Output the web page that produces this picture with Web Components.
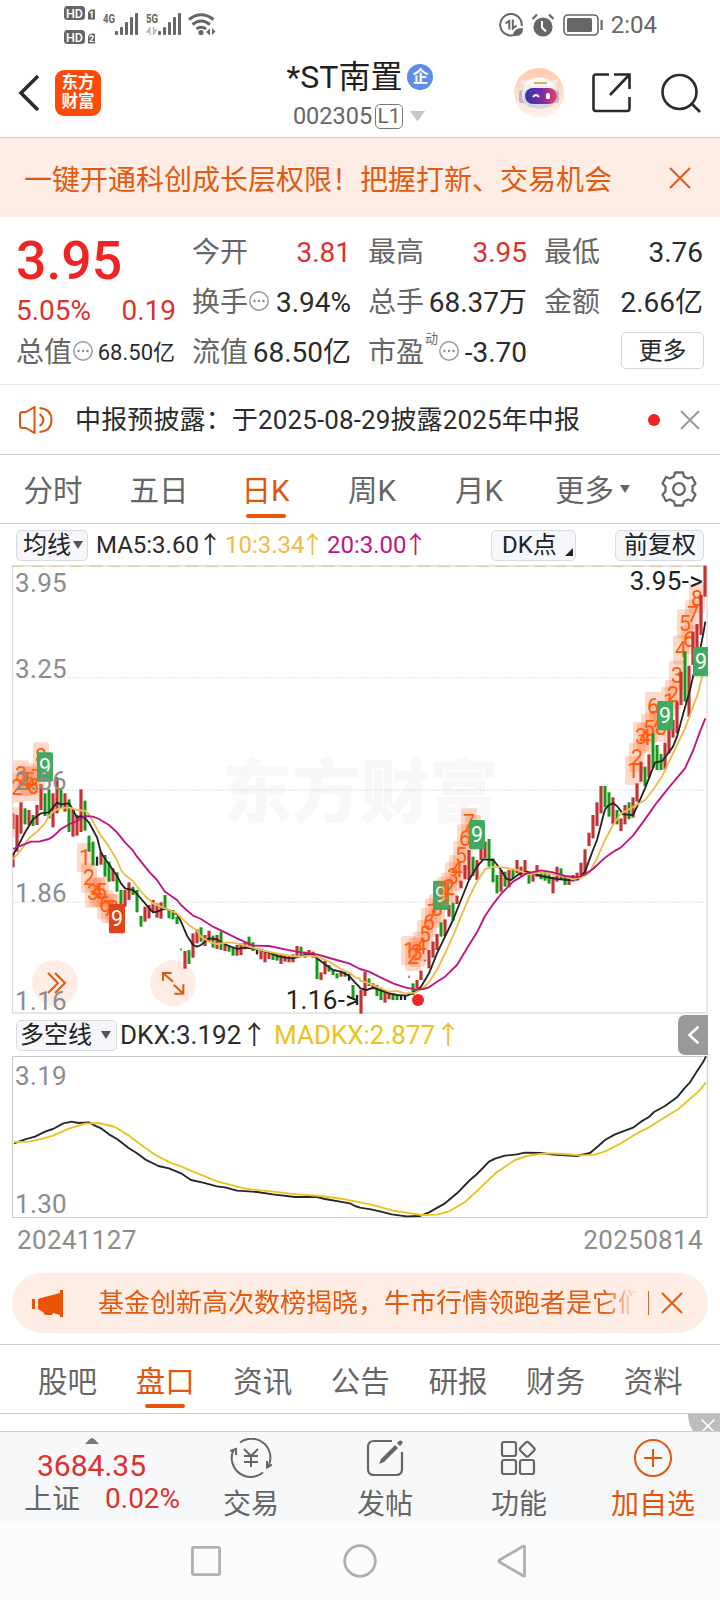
<!DOCTYPE html>
<html lang="zh-CN">
<head>
<meta charset="utf-8">
<title>*ST南置 002305</title>
<style>
html,body{margin:0;padding:0;background:#fff}
body{width:720px;height:1600px;overflow:hidden;font-family:Roboto,"Noto Sans CJK SC",sans-serif;color:#2b2b2b}
</style>
</head>
<body>
<stock-app></stock-app>
<script>
const define = (name, css, html, setup) => {
  const tpl = document.createElement('template');
  tpl.innerHTML = `<style>:host{display:block;box-sizing:border-box}*{box-sizing:border-box}svg{display:block;flex:none}${css}</style>${html}`;
  customElements.define(name, class extends HTMLElement {
    constructor() {
      super();
      this.attachShadow({mode: 'open'}).appendChild(tpl.content.cloneNode(true));
    }
    connectedCallback() { if (setup) setup(this.shadowRoot, this); }
  });
};

define('status-bar', `
:host{height:48px;display:flex;justify-content:space-between;padding:0 64px 0 64px}
.r{display:flex;align-items:center;padding-top:1px;font-size:24px;line-height:30px;color:#666}
`, `
<svg width="154" height="48" viewBox="64 0 154 48" fill="#666" font-family="Roboto,sans-serif">
 <rect x="64" y="6" width="21" height="14" rx="3.5"/><rect x="64" y="30" width="21" height="14" rx="3.5"/>
 <g fill="#fff" font-size="13.5" font-weight="500"><text x="66" y="17.800" textLength="17" lengthAdjust="spacingAndGlyphs">HD</text><text x="66" y="41.800" textLength="17" lengthAdjust="spacingAndGlyphs">HD</text></g>
 <path d="M88 12l3-2.500h4v10h-7zM88 36l3-2.500h4v10h-7z"/>
 <g fill="#fff" font-size="9" font-weight="700"><text x="89" y="18.300">1</text><text x="89" y="42.300">2</text></g>
 <g font-size="12.500" font-weight="700"><text x="103" y="23" textLength="12" lengthAdjust="spacingAndGlyphs">4G</text><text x="146" y="23" textLength="12" lengthAdjust="spacingAndGlyphs">5G</text></g>
 <g><rect x="115" y="31" width="3" height="4" rx="1"/><rect x="120" y="27" width="3" height="8" rx="1"/><rect x="125" y="22" width="3" height="13" rx="1"/><rect x="130" y="17" width="3" height="18" rx="1"/><rect x="135" y="13" width="3" height="22" rx="1"/></g>
 <g transform="translate(43 0)"><rect x="115" y="31" width="3" height="4" rx="1"/><rect x="120" y="27" width="3" height="8" rx="1"/><rect x="125" y="22" width="3" height="13" rx="1"/><rect x="130" y="17" width="3" height="18" rx="1"/><rect x="135" y="13" width="3" height="22" rx="1"/></g>
 <path d="M150 27v8M153.500 27v8M150 28l-3 4h3M153.500 34l3-4h-3" fill="none" stroke="#bbb" stroke-width="1.400"/>
 <g fill="none" stroke="#666" stroke-width="3"><path d="M189 19.500q12-9.500 24.500 0M192.500 24.500q8.500-7 17.500 0M196.500 29q4.500-3.500 9.500 0"/></g>
 <circle cx="201" cy="32.500" r="2.600"/><path d="M210 28.500v7l-4-3.500zM212 28v7l3.500-3.500z"/>
</svg>
<div class="r">
<svg width="24" height="24" viewBox="0 0 24 24" fill="none" stroke="#666" stroke-width="2"><path d="M14 22.300A10.800 10.800 0 1 1 22.700 13"/><path d="M10.300 16.500V8L6.500 10.500M13.800 6.500V15.500L17.500 12.500"/><path d="M14 23q0-8 10-8 0 8-7 8z" fill="#666" stroke="none"/></svg>
<svg style="margin-left:8px" width="24" height="24" viewBox="0 0 24 24"><circle cx="12" cy="14" r="9.600" fill="#666"/><path d="M1.500 6l4.500-4.500M22.500 6L18 1.500" stroke="#666" stroke-width="2.200"/><path d="M11 8v6.500l4 4" stroke="#fff" stroke-width="2" fill="none"/></svg>
<svg style="margin:0 8px 0 8px" width="40" height="22" viewBox="0 0 40 22"><rect x="1" y="1" width="34" height="20" rx="4" fill="none" stroke="#666" stroke-width="1.600"/><rect x="4" y="4" width="25" height="14" rx="1.500" fill="#666"/><rect x="37.500" y="6" width="2.200" height="10" fill="#666"/></svg>
<span style="margin-right:-1px">2:04</span></div>`);

define('stock-header', `
:host{height:90px;display:grid;grid-template-columns:1fr 146px 1fr;border-bottom:1px solid #ccc;padding:0 38px 0 18px}
.l{display:flex;gap:16px;align-items:center}
.logo{width:46px;height:46px;border-radius:9px;background:#ff4a08;color:#fff;font-weight:700;font-size:16.500px;line-height:19px;display:grid;place-content:center;text-align:center;padding-bottom:1px}
.t{display:flex;flex-direction:column;align-items:center;margin-left:15px;margin-right:-5px;padding-top:11px}
.n{display:flex;align-items:center;font-size:32px;line-height:36px;color:#1f1f1f;white-space:nowrap}
.q{width:26px;height:26px;border-radius:50%;background:#5d8de6;color:#fff;font-size:16px;font-weight:700;line-height:25px;text-align:center;margin-left:5px}
.c{display:flex;align-items:center;font-size:23.500px;line-height:30px;color:#666;margin-top:6px;margin-left:-2px}
.lv{border:1.500px solid #777;border-radius:5px;width:28px;height:25px;line-height:22px;font-size:21px;text-align:center;margin:0 7px 0 3px}
.r{display:flex;align-items:center;justify-content:flex-end;margin-right:-19px}
`, `
<div class="l"><svg width="21" height="38" viewBox="0 0 21 38"><path d="M20 2L3 19l17 17" fill="none" stroke="#2b2b2b" stroke-width="3.600"/></svg><div class="logo">东方<br>财富</div></div>
<div class="t"><div class="n">*ST南置<span class="q">企</span></div>
<div class="c">002305<span class="lv">L1</span><svg width="15" height="11" viewBox="0 0 15 11"><path d="M0 0h15L7.500 10.500z" fill="#c6c6c6"/></svg></div></div>
<div class="r">
<svg width="50" height="50" viewBox="0 0 50 50"><defs><linearGradient id="h" x2="0" y2="1"><stop stop-color="#ffc9ad"/><stop offset="1" stop-color="#fff3ee"/></linearGradient><linearGradient id="v"><stop stop-color="#3433a8"/><stop offset=".55" stop-color="#7a2da8"/><stop offset="1" stop-color="#ef4260"/></linearGradient><linearGradient id="w" x2="0" y2="1"><stop stop-color="#fff"/><stop offset="1" stop-color="#cfd0da"/></linearGradient></defs><circle cx="25" cy="25" r="25" fill="url(#h)"/><path d="M6 11q1 6 5 7L17 12q-8 2-11-1zM44 10q0 6-4 8l-6-5q7 1 10-3z" fill="#eeeaf0"/><rect x="5" y="22" width="7" height="13" rx="3" fill="#b9b8c4"/><rect x="38" y="22" width="7" height="13" rx="3" fill="#b9b8c4"/><path d="M8 29Q7 10 25 9.500 43 10 43 29q-1 11-18 11.500Q9 40 8 29z" fill="url(#w)"/><rect x="11" y="20" width="32" height="16" rx="8" fill="url(#v)"/><path d="M19 29q3-4 6 0" fill="none" stroke="#fff" stroke-width="2"/><rect x="32" y="25" width="4" height="6" rx="1.500" fill="#fff"/><path d="M20 15h13" stroke="#e8a66c" stroke-width="2"/></svg>
<svg style="margin-left:28px" width="39" height="40" viewBox="0 0 39 40" fill="none" stroke="#2b2b2b" stroke-width="2.600"><path d="M17 1.500H4Q1.500 1.500 1.500 4v31.500Q1.500 38 4 38h31Q37.500 38 37.500 35.500V24M22 1.500h15.500V16M37 2L18 22"/></svg>
<svg style="margin-left:30px" width="40" height="40" viewBox="0 0 40 40" fill="none" stroke="#2b2b2b" stroke-width="2.600"><circle cx="18.500" cy="19" r="17"/><path d="M30 30l9 9"/></svg>
</div>`);

define('promo-banner', `
:host{height:79px;background:#fdede4;color:#e25a10;font-size:28px;line-height:79px;display:flex;align-items:center;justify-content:space-between;padding:0 29px 0 24px;white-space:nowrap}
span{padding-top:5px}
`, `<span><slot></slot></span><svg width="22" height="22" viewBox="0 0 22 22"><path d="M1 1l20 20M21 1L1 21" stroke="#e25a10" stroke-width="2"/></svg>`);

define('stat-item', `
:host{display:flex;align-items:center;justify-content:space-between;height:50px;font-size:28px;line-height:50px;white-space:nowrap}
.k{color:#666;display:flex;align-items:center;margin-left:-1px}.k svg{display:none;margin:-5px 0 0 1px}
sup{font-size:13px;line-height:14px;align-self:flex-start;margin:4px 0 0 1px}
sup:empty{display:none}
:host([info]) .k svg{display:block}
:host([up]) .v{color:#e0302c}:host([small]) .v{font-size:22px}
.v{margin-right:1px}
`, `<span class="k"><slot name="k"></slot><sup></sup><svg width="20" height="20" viewBox="0 0 20 20"><circle cx="10" cy="10" r="9.200" fill="none" stroke="#999" stroke-width="1.500"/><g fill="#888"><circle cx="5.500" cy="10" r="1.200"/><circle cx="10" cy="10" r="1.200"/><circle cx="14.500" cy="10" r="1.200"/></g></svg></span><span class="v"><slot></slot></span>`,
(r, el) => r.querySelector('sup').textContent = el.getAttribute('tag') || '');

define('quote-panel', `
:host{height:168px;display:grid;grid-template-columns:repeat(4,159px);column-gap:17px;padding:11px 16px 0 17px;border-bottom:1px solid #e8e8e8}
.p{font-size:53.500px;line-height:65px;height:66px;font-weight:500;color:#f02424;margin-left:-1px}
.d{display:flex;justify-content:space-between;font-size:28px;line-height:34px;height:34px;color:#e0302c;margin-left:-1px}
.more{width:83px;height:37px;border:1px solid #d5d5d5;border-radius:5px;font-size:24px;line-height:36px;text-align:center;margin:4px 0 0 auto}
`, `
<div><div class="p">3.95</div><div class="d"><span>5.05%</span><span>0.19</span></div><stat-item info small><span slot="k">总值</span>68.50亿</stat-item></div>
<div><stat-item up><span slot="k">今开</span>3.81</stat-item><stat-item info><span slot="k">换手</span>3.94%</stat-item><stat-item><span slot="k">流值</span>68.50亿</stat-item></div>
<div><stat-item up><span slot="k">最高</span>3.95</stat-item><stat-item><span slot="k">总手</span>68.37万</stat-item><stat-item info tag="动"><span slot="k">市盈</span>-3.70</stat-item></div>
<div><stat-item><span slot="k">最低</span>3.76</stat-item><stat-item><span slot="k">金额</span>2.66亿</stat-item><div class="more">更多</div></div>`);

define('notice-row', `
:host{height:70px;display:flex;align-items:center;border-bottom:1px solid #ccc;padding:0 20px 0 19px;font-size:26px;line-height:69px;white-space:nowrap;letter-spacing:.13px}
.t{flex:1;margin-left:22px;padding-top:1px}
.dot{width:12px;height:12px;border-radius:50%;background:#f02424;margin-right:20px}
`, `<svg width="34" height="28" viewBox="0 0 34 28" fill="none" stroke="#d9570f" stroke-width="2"><path d="M15.500 1v26L7 22H3.500Q1 22 1 19.500v-11Q1 6 3.500 6H7zM20.500 8q8 6 0 12M20.500 2q12 1 12 12t-12 12"/></svg><span class="t"><slot></slot></span><span class="dot"></span><svg width="20" height="20" viewBox="0 0 20 20"><path d="M1 1l18 18M19 1L1 19" stroke="#999" stroke-width="2"/></svg>`);

define('tab-item', `
:host{position:relative;font-size:29.500px;line-height:73px;height:68px;text-align:center;color:#666;white-space:nowrap}
:host([active]){color:#e2560c}
:host([active])::after{content:"";position:absolute;left:50%;margin-left:-20px;bottom:5px;width:40px;height:4px;border-radius:2px;background:#e9540a}
`, `<slot></slot>`);

define('period-tabs', `
:host{height:69px;border-bottom:1px solid #ccc;display:grid;grid-template-columns:106px 106px 107px 106px 108px 128px 54px;align-items:stretch}
.m{display:flex;align-items:center;gap:6px;padding-left:22px}
.m svg{margin-top:-1px}
.g{display:grid;place-items:center start}
`, `<tab-item>分时</tab-item><tab-item>五日</tab-item><tab-item active>日K</tab-item><tab-item>周K</tab-item><tab-item>月K</tab-item>
<div class="m"><tab-item>更多</tab-item><svg width="10" height="8" viewBox="0 0 10 8"><path d="M0 0h10L5 8z" fill="#666"/></svg></div>
<div class="g"><svg width="36" height="36" viewBox="-18 -18 36 36" fill="none" stroke="#666" stroke-width="2.300" stroke-linejoin="round"><path d="M-4-16.500H4L5-12.500 9-10.500 13-12 16.500-5.500 13.500-2.500V2.500L16.500 5.500 13 12 9 10.500 5 12.500 4 16.500H-4L-5 12.500-9 10.500-13 12-16.500 5.500-13.500 2.500V-2.500L-16.500-5.500-13-12-9-10.500-5-12.500z"/><circle r="5.800"/></svg></div>`);

define('chip-button', `
:host{height:31px;border:1px solid #d9dbde;border-radius:5px;background:#f6f7fa;font-size:24px;line-height:29px;display:flex;align-items:center;white-space:nowrap;color:#222;flex:none}
`, `<slot></slot>`);

define('ma-legend', `
:host{height:41px;display:flex;align-items:center;padding:1px 16px 0 16px;font-size:24px;line-height:30px;white-space:nowrap}
span{flex:none;height:30px}
`, `<chip-button style="width:72px;padding-left:6px;gap:2px">均线<svg width="10" height="8" viewBox="0 0 10 8"><path d="M0 0h10L5 8z" fill="#555"/></svg></chip-button>
<span style="width:129px;padding-left:8px">MA5:3.60<i style="font-style:normal;margin-left:-1px">↑</i></span><span style="width:102px;padding-left:8px;color:#f0bb48">10:3.34<i style="font-style:normal;margin-left:-4px">↑</i></span><span style="width:172px;padding-left:8px;color:#bd1683">20:3.00<i style="font-style:normal;margin-left:-3px">↑</i></span>
<chip-button style="width:85px;padding-left:10px;gap:8px">DK点<svg width="8" height="8" viewBox="0 0 8 8" style="margin-top:14px"><path d="M8 0v8H0z" fill="#222"/></svg></chip-button>
<chip-button style="width:89px;margin-left:39px;padding-left:8px">前复权</chip-button>`);

/* Candles: colour, top, bottom; one every 12 units. */
const candles = `r490,532 r375,485 r337,431 g355,403 r360,405 g375,408 r345,405 r283,360 g310,378 g298,385 r310,412 r262,370 g298,355 r310,365 g328,426 r360,440 r375,437 r298,426 g332,422 g437,485 g455,526 k500,527 r487,524 g495,560 g515,575 r535,574 g547,605 g600,655 r600,650 r577,630 g590,615 g600,667 g678,710 r650,695 r645,685 r630,665 r640,683 r637,686 g615,660 g660,685 g660,688 g680,702 d775,782 r783,836 g780,822 r730,803 r718,760 g712,755 r735,768 r722,755 g737,773 r735,777 g725,780 r765,783 g765,785 g770,797 r765,797 r760,795 r757,778 g740,775 g757,783 k775,793 r783,808 r785,817 r785,807 g787,810 g790,812 r795,822 r795,815 r797,817 r793,817 r768,797 g770,795 r785,803 r780,797 r785,803 g800,867 r847,870 r812,853 g825,845 g838,855 g850,865 r843,860 g845,860 k852,872 g885,925 k915,945 r900,971 r845,918 g865,888 r880,898 g885,918 g893,930 r900,938 r905,928 g910,930 g912,930 k918,930 k915,930 e857,864 g880,915 r870,895 r842,870 e809,815 r780,835 r755,803 r732,780 g697,740 r688,738 r645,680 g638,692 r617,642 r572,595 r525,568 r480,570 g500,558 r510,570 r455,510 r455,505 g447,530 g505,577 g555,610 r540,605 g545,590 r540,592 g540,565 r510,550 r530,558 r510,552 g545,581 r545,575 r525,560 g545,568 g545,572 g553,581 r560,610 r530,575 g535,570 g558,585 r562,585 r555,575 r548,572 r518,555 r478,550 r428,468 r375,445 r337,408 r288,370 g288,352 g307,380 r322,403 g360,403 r385,423 r345,403 g337,388 r322,383 r280,335 r215,275 g230,288 r193,262 g130,235 g165,240 g192,240 r158,238 r115,190 r90,143 r35,130 r-55,45 g-115,35 r-73,80 r-175,-75 r-198,-115 r-285,-165 r-373,-280`;
const marks = [[39,352,1],[51,250,2],[63,211,3],[75,230,4],[87,228,5],[99,245,6],[111,220,7],[123,157,8],
[255,459,1],[267,520,2],[279,565,3],[291,562,4],[303,562,5],[315,600,6],[327,612,7],[339,612,8],
[1227,738,1],[1239,755,2],[1251,743,3],[1263,725,4],[1275,690,5],[1287,653,6],[1299,625,7],[1311,612,8],
[1359,515,3],[1371,495,4],[1383,452,5],[1395,403,6],[1407,355,7],[1419,375,8],
[1899,197,1],[1911,158,2],[1923,96,3],[1935,100,4],[1947,71,5],[1959,5,6],[1971,45,7],[1983,68,8],
[2007,-10,1],[2019,-30,2],[2031,-88,3],[2043,-164,4],[2055,-242,5],[2067,-195,6],[2079,-271,7],[2091,-319,8]];
const nines = [[135,187,'#3fab61'],[351,642,'#df4516'],[1323,572,'#3fab61'],[1431,390,'#3fab61'],[1995,33,'#3fab61'],[2103,-129,'#3fab61']];
const lateMarks = [[1335,560,1],[1347,548,2]];
const right = s => s.trim().split(/\s+/).map(p => { const [x, y] = p.split(','); return (+x + 1080) + ',' + y; }).join(' ');
const ma5 = `39,495 54,468 78,422 99,388 123,370 147,367 171,338 183,343 207,340 219,360 231,383 243,378 255,385 267,398 279,420 291,442 303,488 327,523 339,540 351,558 363,580 375,595 399,600 411,612 435,640 459,667 471,665 495,656 519,665 533,675 543,695 561,737 579,765 591,770 603,765 627,745 651,748 663,757 687,768 711,777 735,773 759,776 783,780 807,788 831,798 855,803 879,805 903,798 939,792 951,805 975,823 999,840 1023,845 1047,857 1060,872 1080,893 ` + right(`0,895 20,900 39,893 60,900 87,910 111,915 141,917 165,905 183,890 207,850 231,790 255,740 279,690 303,630 327,570 351,530 370,508 400,510 423,540 440,567 453,570 480,550 500,545 543,558 591,567 627,570 655,567 675,545 699,480 711,450 735,358 747,345 759,340 771,348 790,373 819,375 831,350 855,295 885,218 907,213 939,170 951,140 970,70 990,0 999,-40 1011,-90 1022,-130 1030,-170 1036,-205`);
const ma10 = `39,508 63,480 87,445 111,425 135,400 147,377 165,360 183,355 207,352 231,360 255,363 267,373 279,395 303,437 327,470 351,510 363,540 375,555 399,573 411,590 435,618 459,640 495,655 531,670 543,683 567,705 591,722 603,740 627,755 651,762 687,757 711,760 747,770 771,777 795,783 831,790 867,797 891,800 927,797 951,800 987,815 1023,837 1050,850 1065,862 1080,867 ` + right(`0,872 27,880 63,895 87,905 111,903 135,910 165,908 183,898 207,877 231,840 255,790 279,738 303,680 327,622 351,575 375,537 405,530 435,533 471,540 507,553 543,548 579,553 615,560 639,568 663,563 687,550 711,505 735,450 759,405 783,370 807,358 855,330 879,300 907,258 927,215 951,165 975,115 990,75 1005,35 1014,10 1026,-40 1036,-80`);
const ma20 = `39,477 63,467 93,455 117,455 147,447 159,440 183,417 207,403 231,393 255,378 279,380 297,387 327,405 351,427 375,457 399,482 411,500 447,545 471,570 495,605 531,630 543,645 579,677 603,687 639,710 675,727 711,745 759,767 807,768 855,778 903,787 951,793 999,807 1047,820 1080,837 ` + right(`27,845 63,863 99,880 135,892 165,898 190,897 207,892 231,875 255,860 291,825 327,765 351,727 375,678 399,643 423,612 459,575 500,550 543,541 579,547 615,558 651,562 675,553 699,537 735,503 759,486 783,472 819,437 855,388 891,337 927,292 975,235 1000,180 1020,125 1036,85`);

define('kline-chart', `:host{height:449px}svg{overflow:visible}text{font-family:Roboto,"Noto Sans CJK SC",sans-serif}`, `<svg width="720" height="449" viewBox="0 -375 2160 1347"></svg>`, r => {
  const colours = {r:'#c23434', g:'#149a14', k:'#222', d:'#149a14', e:'#c23434'};
  const widths = {r:9.5, g:9, k:7, d:4, e:4};
  const box = ([x, y, n]) => `<rect x="${x-24}" y="${y}" width="48" height="88" rx="6" fill="#ff6a2a" fill-opacity=".25"/><text x="${x}" y="${y+66}" fill="#ff5a0c">${n}</text>`;
  const bars = candles.split(' ').map((c, i) => {
    const [a, b] = c.slice(1).split(',').map(Number), w = widths[c[0]];
    return `<rect x="${39+12*i-w/2}" y="${a}" width="${w}" height="${b-a}" fill="${colours[c[0]]}"/>`;
  }).join('');
  const line = (p, c) => `<polyline points="${p}" fill="none" stroke="${c}" stroke-width="5.600" stroke-linejoin="round"/>`;
  r.querySelector('svg').innerHTML = `
<defs><clipPath id="c"><rect x="38" y="-375" width="2086" height="1347"/></clipPath></defs>
<text x="668" y="382" font-size="208" font-weight="900" fill="#f8f8f8" textLength="828">东方财富</text>
<g stroke="#dcdcdc" stroke-width="4" stroke-dasharray="4 5"><path d="M37-37H2122M37 300H2122M37 636H2122"/></g>
<path d="M37.500-372V969H2121V-372" fill="none" stroke="#dedede" stroke-width="4"/><path d="M36-372.500H2122" stroke="#e4e2e0" stroke-width="5"/>
<path d="M37-371H2122" stroke="#d9c69b" stroke-width="3" stroke-dasharray="36 22"/>
<g clip-path="url(#c)"><g font-size="64" text-anchor="middle">${marks.map(box).join('')}</g>
${bars}${line(ma5,'#262626')}${line(ma10,'#efbb4c')}${line(ma20,'#bd1683')}
<g font-size="64" text-anchor="middle">${nines.map(([x,y,c]) => `<rect x="${x-24}" y="${y}" width="48" height="88" rx="5" fill="${c}"/><text x="${x}" y="${y+65}" fill="#fff">9</text>`).join('')}${lateMarks.map(box).join('')}</g></g>
<circle cx="1254" cy="930" r="18" fill="#f02424"/>
<g fill="#ff6a2a" fill-opacity=".12"><circle cx="165" cy="879" r="69"/><circle cx="519" cy="879" r="69"/></g>
<g fill="none" stroke="#dd5a12" stroke-width="6"><path d="M144 849l30 30-30 30M165 849l30 30-30 30"/><path d="M489 873v-24h26M489 849l30 26M523 911h27V883M521 884l28 26"/></g>
<g font-size="78" fill="#8c8c8c" letter-spacing="1"><text x="45" y="-294">3.95</text><text x="45" y="-36">3.25</text><text x="45" y="300">2.56</text><text x="45" y="636">1.86</text><text x="45" y="960">1.16</text></g>
<g font-size="78" fill="#222" letter-spacing="1"><text x="857" y="957">1.16-&gt;</text><text x="1889" y="-300">3.95-&gt;</text></g>`;
});

define('dkx-legend', `
:host{height:41px;display:flex;align-items:center;padding:1px 12px 0 16px;font-size:26px;line-height:30px;white-space:nowrap}
span{flex:none;height:30px}
.s{width:30px;height:40px;border-radius:7px 0 0 7px;background:#999;display:grid;place-items:center;margin-left:auto}
`, `<chip-button style="width:101px;padding-left:3px;gap:9px">多空线<svg width="10" height="8" viewBox="0 0 10 8"><path d="M0 0h10L5 8z" fill="#555"/></svg></chip-button>
<span style="width:156px;padding-left:3px">DKX:3.192↑</span><span style="padding-left:1px;color:#ecc220">MADKX:2.877↑</span>
<div class="s"><svg width="12" height="18" viewBox="0 0 12 18"><path d="M10.500 1.500L2.500 9l8 7.500" fill="none" stroke="#fff" stroke-width="2.600" stroke-linecap="round"/></svg></div>`);

define('dkx-chart', `
:host{height:206px}
.d{display:flex;justify-content:space-between;padding:4px 17px 0 17px;font-size:26px;line-height:34px;color:#8c8c8c;letter-spacing:.35px}
`, `<svg width="720" height="164" viewBox="0 135 2160 492" fill="none" stroke-width="5.600" stroke-linejoin="round">
<path d="M37.500 139.500H2122V622.500H37.500z" stroke="#c8c8c8" stroke-width="3"/>
<polyline stroke="#262626" id="a"/><polyline stroke="#ecc220" id="b"/>
<g font-family="Roboto,sans-serif" font-size="78" fill="#8c8c8c" letter-spacing="1"><text x="45" y="224">3.19</text><text x="45" y="608">1.30</text></g></svg>
<div class="d"><span>20241127</span><span>20250814</span></div>`, r => {
  r.getElementById('a').setAttribute('points', `42,400 75,388 105,380 135,365 159,357 190,340 215,335 235,339 267,337 285,347 303,355 327,373 351,387 387,415 411,430 435,448 475,468 507,475 543,490 573,510 609,518 651,529 675,532 711,542 771,546 819,553 885,561 951,561 975,567 1020,575 1050,580 1065,588 1080,593 ` + right(`33,598 63,605 95,613 140,619 180,618 207,607 255,580 291,550 330,510 351,492 387,455 405,446 435,437 471,433 495,428 543,429 579,434 651,438 690,429 715,408 735,390 765,373 819,353 843,335 867,321 882,306 915,288 951,262 975,233 990,217 1010,185 1030,155 1038,139`));
  r.getElementById('b').setAttribute('points', `42,396 87,395 120,388 159,377 207,356 255,341 297,339 345,351 387,377 423,404 465,434 515,460 543,469 579,485 615,499 651,514 735,536 819,545 891,553 960,558 1030,567 1080,577 ` + right(`33,584 99,602 135,607 183,615 231,614 267,604 315,576 351,543 387,508 411,486 435,470 465,450 500,438 540,432 570,430 609,432 660,436 705,434 735,424 783,400 831,370 867,352 915,322 955,297 1000,258 1018,242 1038,217`));
});

define('news-pill', `
:host{height:60px;margin:12px 12px 11px;border-radius:30px;background:#fdede4;color:#e25a10;display:flex;align-items:center;padding:0 25px 0 20px;font-size:26px;line-height:61px;white-space:nowrap}
.t{width:542px;margin-left:35px;overflow:hidden;-webkit-mask:linear-gradient(90deg,#000 505px,transparent 540px);mask:linear-gradient(90deg,#000 505px,transparent 540px)}
i{width:1px;height:24px;background:#d06a2a;margin:0 12px 0 8px}
`, `<svg width="31" height="27" viewBox="0 0 31 27" fill="#ea5404"><path d="M0 9h3v10H0zM6 9l3-1L28 3V0h3v27h-3v-2l-7-2-1 2h-7l-2-3-5-3z"/></svg><span class="t"><slot></slot></span><i></i><svg width="22" height="22" viewBox="0 0 22 22"><path d="M1 1l20 20M21 1L1 21" stroke="#e25a10" stroke-width="2"/></svg>`);

define('section-tabs', `
:host{height:70px;border-top:1px solid #ccc;border-bottom:1px solid #ccc;display:grid;grid-template-columns:repeat(7,97.600px);padding-left:18.800px}
tab-item{line-height:74px}
`, `<tab-item>股吧</tab-item><tab-item active>盘口</tab-item><tab-item>资讯</tab-item><tab-item>公告</tab-item><tab-item>研报</tab-item><tab-item>财务</tab-item><tab-item>资料</tab-item>`);

define('content-peek', `:host{height:18px;overflow:hidden;border-bottom:1px solid #ccc;display:flex;justify-content:flex-end}`,
`<svg width="32" height="17" viewBox="0 0 32 17"><path d="M0 0h32v17H5Q0 10 0 0z" fill="#bdbdbd"/><path d="M13.500 5.500l13 13M26.500 5.500l-13 13" stroke="#fff" stroke-width="1.600"/></svg>`);

define('action-item', `
:host{display:flex;flex-direction:column;align-items:center;font-size:28px;line-height:34px;color:#666;padding-top:6px;white-space:nowrap}
::slotted(svg){display:block;width:42px;height:40px;margin-bottom:10px}
`, `<slot name="icon"></slot><slot></slot>`);

define('action-bar', `
:host{height:90px;background:#f7f8fa;display:grid;grid-template-columns:184px 134px 134px 134px 134px}
.i{color:#e0302c;display:flex;flex-direction:column;padding-top:6px}
.i svg{margin-left:85px}
.p{font-size:30px;line-height:34px;padding-left:37px;margin-top:5px}
.c{font-size:28px;line-height:34px;padding-left:24px;display:flex;gap:25px;margin-top:-1px}
.c b{font-weight:400;color:#666;padding-top:1px}
`, `
<div class="i"><svg width="14" height="6" viewBox="0 0 14 6"><path d="M0 6Q5 0 7 0t7 6z" fill="#777"/></svg><div class="p">3684.35</div><div class="c"><b>上证</b><span>0.02%</span></div></div>
<action-item><svg slot="icon" viewBox="-21 -20 42 40" fill="none" stroke="#666" stroke-width="2"><path d="M-11-15.500A19 19 0 0 1 17.500 8M12 14.500A19 19 0 0 1-17.500-8"/><path d="M21 6.500l-5 3 0-6.500M-21-7l6-2 0 6"/><path d="M-7-9L0-2l7-7M0-2V9M-7-2H7M-7 4H7"/></svg>交易</action-item>
<action-item><svg slot="icon" viewBox="-21 -20 42 40" fill="none" stroke="#666" stroke-width="2.200"><path d="M7-17H-11Q-17-17-17-11V11Q-17 17-11 17H11Q17 17 17 11V-6"/><path d="M-6 6l2-5L10-13l3 3L-1 4z M12-15l2-2q2-1 3 0 1 2 0 3l-2 2z" fill="#666" stroke="none"/></svg>发帖</action-item>
<action-item><svg slot="icon" viewBox="-21 -20 42 40" fill="none" stroke="#666" stroke-width="2.200"><rect x="-17" y="-16" width="14" height="14" rx="2"/><rect x="-17" y="2" width="14" height="14" rx="2"/><rect x="1" y="2" width="14" height="14" rx="2"/><rect x="2.500" y="-14.500" width="11.500" height="11.500" rx="2" transform="rotate(45 8.250 -8.750)"/></svg>功能</action-item>
<action-item style="color:#e2560c"><svg slot="icon" viewBox="-21 -20 42 40" fill="none" stroke="#e2560c" stroke-width="2"><circle r="18"/><path d="M-9 0H9M0-9V9"/></svg>加自选</action-item>`);

define('system-nav', `:host{height:78px;background:#fcfcfc;display:flex;align-items:center;padding-left:191px}`,
`<svg width="337" height="36" viewBox="191 1543 337 36" fill="none" stroke="#b0b0b0" stroke-width="2.800"><rect x="192.400" y="1547.400" width="27.200" height="27.200" rx="1.500"/><circle cx="360" cy="1561" r="15.300"/><path d="M524.500 1546.500v29.500l-1 0L499.500 1562q-1-1 0-2l24-14z" stroke-linejoin="round"/></svg>`);

define('stock-app', `:host{width:720px;height:1600px;overflow:hidden;background:#fff}`, `
<status-bar></status-bar><stock-header></stock-header>
<promo-banner>一键开通科创成长层权限！把握打新、交易机会</promo-banner>
<quote-panel></quote-panel>
<notice-row>中报预披露：于2025-08-29披露2025年中报</notice-row>
<period-tabs></period-tabs><ma-legend></ma-legend><kline-chart></kline-chart>
<dkx-legend></dkx-legend><dkx-chart></dkx-chart>
<news-pill>基金创新高次数榜揭晓，牛市行情领跑者是它们！</news-pill>
<section-tabs></section-tabs><content-peek></content-peek>
<action-bar></action-bar><system-nav></system-nav>`);
</script>
</body>
</html>
